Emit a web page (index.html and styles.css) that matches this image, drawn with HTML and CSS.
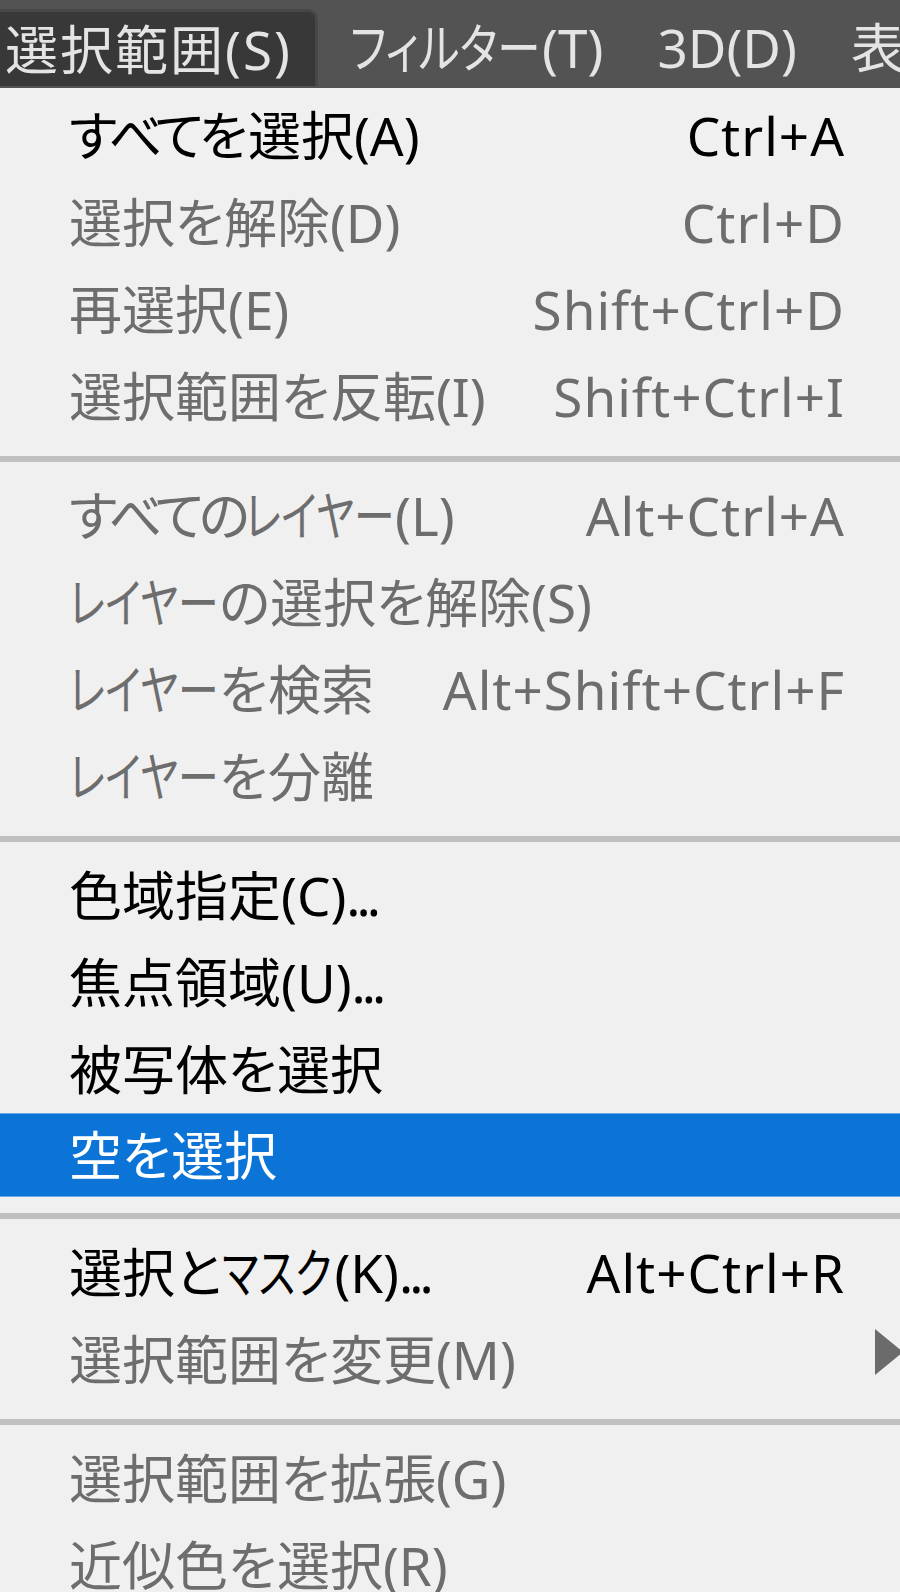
FILE: index.html
```html
<!DOCTYPE html>
<html lang="ja">
<head>
<meta charset="utf-8">
<title>選択範囲メニュー</title>
<link rel="stylesheet" href="styles.css">
</head>
<body>
<div class="menubar">
  <div class="mb-item mb-active">選択範囲(S)</div>
  <div class="mb-item"><span class="k k-filter">フィルター</span>(T)</div>
  <div class="mb-item">3D(D)</div>
  <div class="mb-item">表示(V)</div>
</div>
<div class="menu">
  <div class="item"><span class="label"><span class="h">すべて</span>を選択(A)</span><span class="key">Ctrl+A</span></div>
  <div class="item disabled"><span class="label">選択を解除(D)</span><span class="key">Ctrl+D</span></div>
  <div class="item disabled"><span class="label">再選択(E)</span><span class="key">Shift+Ctrl+D</span></div>
  <div class="item disabled"><span class="label">選択範囲を反転(I)</span><span class="key">Shift+Ctrl+I</span></div>
  <div class="sep"></div>
  <div class="item disabled"><span class="label"><span class="h">すべての</span><span class="k k-layer">レイヤー</span>(L)</span><span class="key">Alt+Ctrl+A</span></div>
  <div class="item disabled"><span class="label"><span class="k k-layer">レイヤー</span>の選択を解除(S)</span></div>
  <div class="item disabled"><span class="label"><span class="k k-layer">レイヤー</span>を検索</span><span class="key">Alt+Shift+Ctrl+F</span></div>
  <div class="item disabled"><span class="label"><span class="k k-layer">レイヤー</span>を分離</span></div>
  <div class="sep"></div>
  <div class="item"><span class="label">色域指定(C)<span class="dots">...</span></span></div>
  <div class="item"><span class="label">焦点領域(U)<span class="dots">...</span></span></div>
  <div class="item"><span class="label">被写体を選択</span></div>
  <div class="item active"><span class="label">空を選択</span></div>
  <div class="sep"></div>
  <div class="item"><span class="label">選択と<span class="k k-mask">マスク</span>(K)<span class="dots">...</span></span><span class="key">Alt+Ctrl+R</span></div>
  <div class="item disabled"><span class="label">選択範囲を変更(M)</span><svg class="arrow" width="28" height="46" viewBox="0 0 28 46"><polygon points="0,0 28,23 0,46" fill="#6b6b6b"/></svg></div>
  <div class="sep"></div>
  <div class="item disabled"><span class="label">選択範囲を拡張(G)</span></div>
  <div class="item disabled"><span class="label">近似色を選択(R)</span></div>
</div>
</body>
</html>
```
FILE: styles.css
```css
html, body {
  margin: 0;
  padding: 0;
}
body {
  width: 900px;
  height: 1592px;
  overflow: hidden;
  background: #f0f0f0;
  font-family: "Noto Sans", "Noto Sans CJK JP", sans-serif;
  font-feature-settings: "palt";
  font-size: 53px;
  line-height: 1;
}
.menubar {
  height: 88px;
  background: #535353;
  display: flex;
  align-items: flex-end;
  white-space: nowrap;
  overflow: hidden;
}
.mb-item {
  color: #e4e4e4;
  height: 77px;
  display: flex;
  align-items: center;
  padding: 0 27px;
  margin-bottom: 2px;
}
.mb-active {
  background: #383838;
  padding: 0 23px 0 5px;
  margin-right: 5px;
  border-top: 3px solid #474747;
  border-right: 3px solid #474747;
  border-radius: 0 10px 0 0;
  height: 74px;
  letter-spacing: 2px;
}
.menu {
  padding-top: 4px;
}
.item {
  height: 87px;
  display: flex;
  align-items: center;
  padding: 0 55px 0 69px;
  color: #000;
  white-space: nowrap;
}
.item.disabled {
  color: #6d6d6d;
}
.item.active {
  background: #0b74d6;
  color: #fff;
  height: 82px;
  border-top: 1px solid #6aa8e6;
  border-bottom: 1px solid #6aa8e6;
  margin-bottom: 3px;
}
.k {
  display: inline-block;
  transform: scaleX(0.77);
  transform-origin: 0 50%;
}
.k-layer {
  margin-right: -44px;
}
.k-mask {
  margin-right: -30px;
}
.k-filter {
  transform: scaleX(0.82);
  margin-right: -40px;
}
.h {
  letter-spacing: -5px;
}
.dots {
  letter-spacing: -4px;
}
.key {
  margin-left: auto;
  letter-spacing: 1px;
}
.arrow {
  margin-left: auto;
  margin-right: -58px;
  margin-bottom: 16px;
}
.sep {
  height: 6px;
  background: #c0c0c0;
  margin: 16px 0 10px;
}
```
